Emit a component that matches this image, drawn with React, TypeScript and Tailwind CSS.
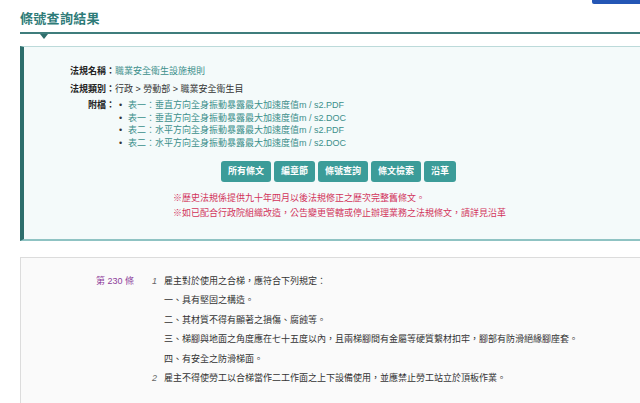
import React from "react";

const attachments = [
  "表一：垂直方向全身振動暴露最大加速度值m / s2.PDF",
  "表一：垂直方向全身振動暴露最大加速度值m / s2.DOC",
  "表二：水平方向全身振動暴露最大加速度值m / s2.PDF",
  "表二：水平方向全身振動暴露最大加速度值m / s2.DOC",
];

const buttons = ["所有條文", "編章節", "條號查詢", "條文檢索", "沿革"];

const clauses = [
  "一、具有堅固之構造。",
  "二、其材質不得有顯著之損傷、腐蝕等。",
  "三、梯腳與地面之角度應在七十五度以內，且兩梯腳間有金屬等硬質繫材扣牢，腳部有防滑絕緣腳座套。",
  "四、有安全之防滑梯面。",
];

export default function App() {
  return (
    <div
      className="relative w-[640px] h-[403px] overflow-hidden bg-white text-[9px] text-[#333]"
      style={{ fontFamily: '"Liberation Sans", "Noto Sans CJK TC", sans-serif' }}
    >
      {/* top-right tab */}
      <div className="absolute right-0 top-0 h-[4px] w-[48px] rounded-bl-[2px] bg-[#2456b5]" />

      <div className="pl-[20px] pt-[10px]">
        <h1 className="text-[13px] font-bold leading-[18px] tracking-[0.3px] text-[#2e7b78]">條號查詢結果</h1>
        <div className="relative mt-[4px] h-[2px] bg-[#3f7d7c]">
          <div className="absolute left-[20px] top-[2px] h-0 w-0 border-x-[4px] border-t-[5px] border-x-transparent border-t-[#2f6e6c]" />
        </div>

        {/* info box */}
        <div className="mt-[12px] h-[195px] border-l-[4px] border-t border-b-[2px] border-l-[#2d6e6c] border-t-[#bcdada] border-b-[#8fc3c3] bg-[#f4fafa] pl-[46px] pt-[17px]">
          <div className="flex leading-[14px]">
            <span className="w-[45px] text-right font-bold text-[#222]">法規名稱：</span>
            <span className="text-[#3b8f8b]">職業安全衛生設施規則</span>
          </div>
          <div className="mt-[4px] flex leading-[14px]">
            <span className="w-[45px] text-right font-bold text-[#222]">法規類別：</span>
            <span>行政 &gt; 勞動部 &gt; 職業安全衛生目</span>
          </div>
          <div className="mt-[3px] flex">
            <span className="w-[45px] text-right font-bold leading-[12.5px] text-[#222]">附檔：</span>
            <ul>
              {attachments.map((a) => (
                <li key={a} className="flex leading-[12.5px]">
                  <span className="w-[13px] pl-[4px] text-[#333]">•</span>
                  <span className="text-[#3b8f8b]">{a}</span>
                </li>
              ))}
            </ul>
          </div>

          <div className="mt-[12px] ml-[151px] flex gap-[3px]">
            {buttons.map((b) => (
              <div
                key={b}
                className="flex h-[21px] items-center rounded-[3px] bg-[#3c9c99] px-[7px] text-[9px] font-bold text-white"
              >
                {b}
              </div>
            ))}
          </div>

          <div className="mt-[9px] ml-[103px] leading-[15px] text-[#d2335b]">
            <p>※歷史法規係提供九十年四月以後法規修正之歷次完整舊條文。</p>
            <p>※如已配合行政院組織改造，公告變更管轄或停止辦理業務之法規條文，請詳見沿革</p>
          </div>
        </div>

        {/* article */}
        <div className="mt-[16px] h-[160px] border-l border-t border-[#dcdcdc] bg-[#fafafa] pt-[14px]">
          <div className="flex">
            <div className="w-[113px] text-right leading-[19.4px] text-[#8e3d9b]">第 230 條</div>
            <div className="ml-[17px]">
              <div className="flex leading-[19.4px]">
                <span className="w-[13px] pl-[1px] italic text-[#666]">1</span>
                <span>雇主對於使用之合梯，應符合下列規定：</span>
              </div>
              {clauses.map((c) => (
                <div key={c} className="pl-[13px] leading-[19.4px]">
                  {c}
                </div>
              ))}
              <div className="flex leading-[19.4px]">
                <span className="w-[13px] pl-[1px] italic text-[#666]">2</span>
                <span>雇主不得使勞工以合梯當作二工作面之上下設備使用，並應禁止勞工站立於頂板作業。</span>
              </div>
            </div>
          </div>
        </div>
      </div>
    </div>
  );
}
